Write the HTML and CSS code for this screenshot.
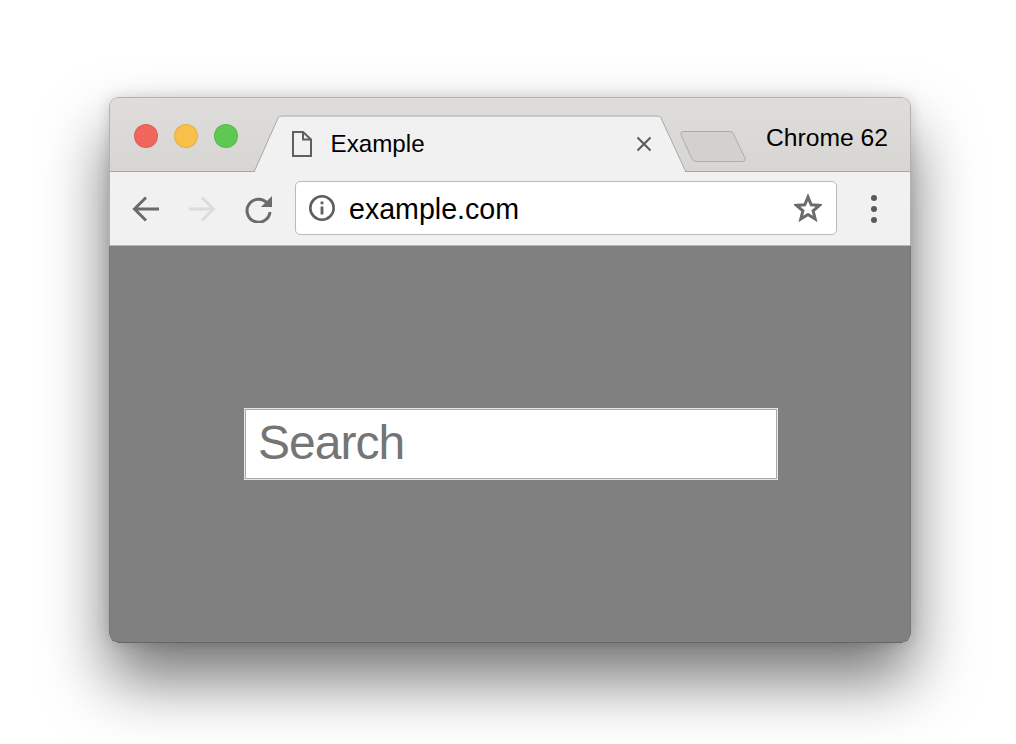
FILE: index.html
```html
<!DOCTYPE html>
<html lang="en">
<head>
  <meta charset="UTF-8">
  <title>Example</title>
  <link rel="stylesheet" href="styles.css">
</head>
<body>
  <div class="window">
    <header class="tabstrip">
      <div class="lights">
        <span class="light red"></span>
        <span class="light yellow"></span>
        <span class="light green"></span>
      </div>
      <div class="tab">
        <svg class="tab-shape" width="432" height="57" viewBox="0 0 432 57">
          <path d="M0.5 56 L24 3 Q25 1 28 1 L403 1 Q406 1 407 3 L431.5 56" fill="#f1f1f1" stroke="#a9a8a6" stroke-width="1"/>
          <rect x="1" y="56" width="430" height="1" fill="#f1f1f1"/>
        </svg>
        <svg class="page-icon" width="22" height="28" viewBox="0 0 22 28">
          <path d="M2 2 H12 L20 9.500 V26 H2 Z M12 2 V9.500 H20" fill="none" stroke="#5f5f5f" stroke-width="2"/>
        </svg>
        <span class="tab-title">Example</span>
        <svg class="tab-close" width="16" height="16" viewBox="0 0 16 16">
          <path d="M1.5 1.5 L14.5 14.5 M14.5 1.5 L1.5 14.5" stroke="#5a5a5a" stroke-width="2"/>
        </svg>
      </div>
      <svg class="new-tab" width="66" height="31" viewBox="0 0 66 31">
        <path d="M3 0.5 H50 Q52.5 0.5 53.5 3 L65 27 Q66 30.5 62.500 30.5 H16 Q13.500 30.500 12 28 L1 4 Q0 0.5 3 0.5 Z" fill="#d3d1cf" stroke="#aeaca9"/>
      </svg>
      <span class="browser-name">Chrome 62</span>
    </header>

    <nav class="toolbar">
      <svg class="nav-icon" width="28" height="28" viewBox="0 0 28 28">
        <path d="M27 14 H3 M14 2.500 L2.500 14 L14 25.500" fill="none" stroke="#6b6b6b" stroke-width="3"/>
      </svg>
      <svg class="nav-icon forward" width="28" height="28" viewBox="0 0 28 28">
        <path d="M1 14 H25 M14 2.500 L25.500 14 L14 25.500" fill="none" stroke="#dcdcdc" stroke-width="3"/>
      </svg>
      <svg class="nav-icon reload" width="28" height="28" viewBox="0 0 28 28">
        <path d="M22.500 8.500 A11.500 11.500 0 1 0 25 17" fill="none" stroke="#6b6b6b" stroke-width="3"/>
        <path d="M27 1 V12 H16 Z" fill="#6b6b6b"/>
      </svg>
      <div class="omnibox">
        <svg class="info-icon" width="28" height="28" viewBox="0 0 28 28">
          <circle cx="14" cy="14" r="11.700" fill="none" stroke="#5f5f5f" stroke-width="2.600"/>
          <rect x="12.600" y="12.500" width="2.800" height="8" fill="#5f5f5f"/>
          <rect x="12.600" y="7.500" width="2.800" height="2.800" fill="#5f5f5f"/>
        </svg>
        <span class="url">example.com</span>
        <svg class="star-icon" width="28" height="28" viewBox="0 0 28 28">
          <path d="M14 3 L17.200 10.800 L25.500 11.400 L19.100 16.800 L21.200 25 L14 20.500 L6.800 25 L8.900 16.800 L2.500 11.400 L10.800 10.800 Z" fill="none" stroke="#6b6b6b" stroke-width="3"/>
        </svg>
      </div>
      <div class="menu">
        <span></span>
        <span></span>
        <span></span>
      </div>
    </nav>

    <main class="content">
      <div class="search">Search</div>
    </main>
  </div>
</body>
</html>
```

FILE: styles.css
```css
html, body {
  height: 744px;
  overflow: hidden;
}

body {
  margin: 0;
  padding-top: 97px;
  box-sizing: border-box;
  background-color: #fff;
  font-family: "Liberation Sans", Arial, sans-serif;
  color: #000;
}

.window {
  width: 802px;
  height: 546px;
  margin-left: 109px;
  display: flex;
  flex-direction: column;
  border-radius: 9px;
  overflow: hidden;
  box-shadow: 0 36px 64px rgba(0, 0, 0, 0.55), 0 0 14px rgba(0, 0, 0, 0.14);
}

/* tab strip */
.tabstrip {
  box-sizing: border-box;
  height: 75px;
  flex: none;
  display: flex;
  border: 1px solid #b4b3b1;
  border-bottom-color: #a9a8a6;
  border-radius: 9px 9px 0 0;
  background: linear-gradient(#dfdddb, #d8d6d3);
}

.lights {
  display: flex;
  gap: 16px;
  margin: 26px 0 0 24px;
}

.light {
  width: 24px;
  height: 24px;
  box-sizing: border-box;
  border-radius: 50%;
  border: 1px solid rgba(0, 0, 0, 0.08);
}

.red { background-color: #f1665c; }
.yellow { background-color: #f8bf4a; }
.green { background-color: #5ec852; }

.tab {
  position: relative;
  width: 432px;
  height: 57px;
  margin: 17px 0 0 16px;
  display: flex;
  align-items: center;
  flex: none;
}

.tab-shape {
  position: absolute;
  left: 0;
  top: 0;
}

.page-icon,
.tab-title,
.tab-close {
  position: relative;
}

.page-icon {
  margin-left: 37px;
}

.tab-title {
  margin-left: 17.500px;
  font-size: 24.200px;
}

.tab-close {
  margin-left: auto;
  margin-right: 34px;
}

.new-tab {
  flex: none;
  margin: 33px 0 0 -6px;
}

.browser-name {
  margin: 25px 22px 0 auto;
  font-size: 24.700px;
  line-height: 30px;
}

/* toolbar */
.toolbar {
  box-sizing: border-box;
  height: 74px;
  flex: none;
  display: flex;
  align-items: center;
  padding: 0 22px;
  background-color: #f1f1f1;
  border-left: 1px solid #b4b3b1;
  border-right: 1px solid #b4b3b1;
  border-bottom: 1px solid #b5b5b5;
}

.nav-icon {
  flex: none;
}

.forward {
  margin-left: 28px;
}

.reload {
  margin-left: 29px;
}

.omnibox {
  box-sizing: border-box;
  width: 542px;
  height: 54px;
  margin: -1px 0 0 22px;
  padding: 0 14px 0 12px;
  display: flex;
  align-items: center;
  background-color: #fff;
  border: 1px solid #b9b9b9;
  border-radius: 5px;
}

.url {
  margin: 2px 0 0 13px;
  font-size: 28.600px;
}

.star-icon {
  margin-left: auto;
}

.menu {
  margin-left: 34px;
  display: flex;
  flex-direction: column;
  gap: 5px;
}

.menu span {
  width: 6px;
  height: 6px;
  border-radius: 50%;
  background-color: #5a5a5a;
}

/* page */
.content {
  box-sizing: border-box;
  flex: 1;
  padding: 162px 0 0 134px;
  background-color: #808080;
  border: 1px solid #777;
  border-top: 0;
  border-bottom-color: #666;
  border-radius: 0 0 9px 9px;
}

.search {
  box-sizing: border-box;
  width: 534px;
  height: 72px;
  padding-left: 13px;
  line-height: 68px;
  font-size: 48px;
  letter-spacing: -1px;
  color: #757575;
  background-color: #fff;
  border: 1px solid #e6e6e6;
  box-shadow: inset 0 0 0 1px #aaa;
}
```
